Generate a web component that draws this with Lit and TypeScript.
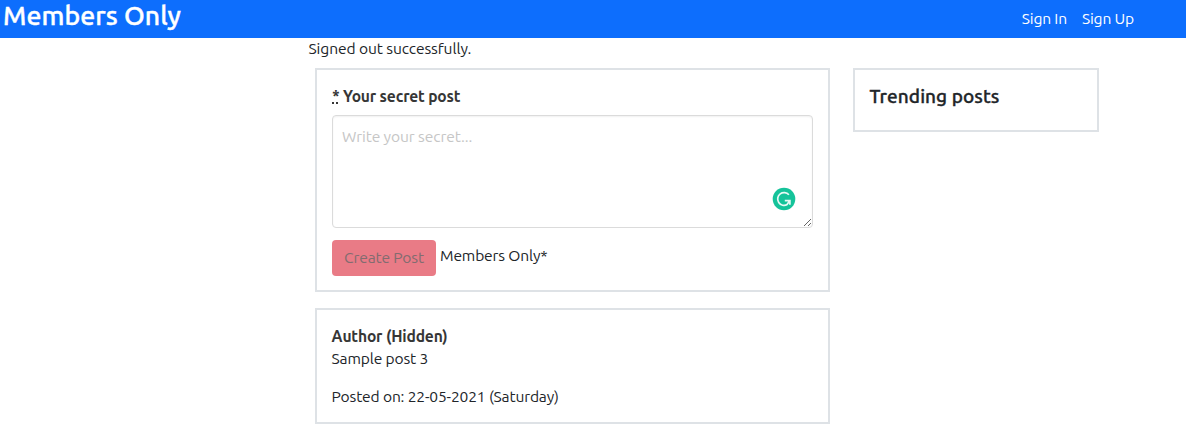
import { LitElement, html, css } from "lit";
import { customElement } from "lit/decorators.js";

@customElement("app-root")
class AppRoot extends LitElement {
  static styles = css`
    :host {
      display: block;
      height: 434px;
      overflow: hidden;
      background: #fff;
      color: #212529;
      font: 15.6px/22.6px Ubuntu, "Noto Sans", sans-serif;
      letter-spacing: -0.16px;
    }
    * { box-sizing: border-box; }
    nav {
      display: flex;
      justify-content: space-between;
      height: 37.6px;
      padding: 0 52px 0 3px;
      background: #0d6efd;
      color: #fff;
    }
    .brand {
      margin: 0;
      font-size: 26.6px;
      font-weight: 500;
      line-height: 30px;
      letter-spacing: 0.05px;
      -webkit-text-stroke: 0.4px currentColor;
    }
    .links { display: flex; gap: 15px; padding-top: 7px; }
    .links a { color: inherit; text-decoration: none; }
    .notice { margin: 0; height: 30.4px; padding-left: 308.5px; line-height: 21.4px; letter-spacing: -0.1px; }
    .columns { display: flex; align-items: flex-start; gap: 23px; padding-left: 315px; }
    .feed { display: flex; flex-direction: column; gap: 16px; width: 515px; }
    .card { border: 2px solid #dee2e6; padding: 15px; }
    .compose { height: 224px; }
    .post { height: 116px; padding-left: 14.6px; }
    .trending { width: 246px; height: 64px; padding-left: 14.5px; }
    .trending h2 {
      margin: 0;
      font-size: 19px;
      font-weight: 500;
      line-height: 23px;
      letter-spacing: 0.06px;
      -webkit-text-stroke: 0.35px currentColor;
    }
    label { display: block; height: 30px; color: #363636; font-weight: 700; }
    abbr {
      display: inline-block;
      width: 6px;
      height: 20.5px;
      margin-right: 5px;
      line-height: 22px;
      text-decoration: none;
      background: radial-gradient(circle at 1px 1px, #363636 0.8px, transparent 1px) 0 100% / 4px 3px repeat-x;
      vertical-align: top;
    }
    .field { position: relative; height: 113px; }
    textarea {
      display: block;
      width: 481px;
      height: 113px;
      margin: 0;
      padding: 9px;
      border: 1px solid #dbdbdb;
      border-radius: 4px;
      background: #fff;
      box-shadow: inset 0 1px 2px rgba(10, 10, 10, 0.06);
      font: inherit;
      letter-spacing: -0.1px;
      outline: 0;
      resize: vertical;
    }
    textarea::placeholder { color: #c6c6c6; opacity: 1; }
    .checker { position: absolute; left: 440px; top: 72px; }
    .actions { display: flex; gap: 4px; padding-top: 11.8px; }
    button {
      width: 104px;
      height: 36px;
      padding: 0;
      border: 0;
      border-radius: 4px;
      background: #e97b86;
      color: #826c70;
      font: inherit;
      letter-spacing: inherit;
    }
    .members { padding-top: 4px; }
    .author { height: 22px; color: #363636; font-weight: 700; }
    .body { height: 38px; }
  `;

  render() {
    return html`
      <nav>
        <h1 class="brand">Members Only</h1>
        <div class="links"><a>Sign In</a><a>Sign Up</a></div>
      </nav>
      <p class="notice">Signed out successfully.</p>
      <main class="columns">
        <div class="feed">
          <section class="card compose">
            <label><abbr title="required">*</abbr>Your secret post</label>
            <div class="field">
              <textarea placeholder="Write your secret..."></textarea>
              <svg class="checker" width="24" height="24" viewBox="0 0 24 24" fill="none">
                <circle cx="12" cy="12" r="11.3" fill="#15c39a" />
                <path d="M16.9 7.8A6.4 6.4 0 1 0 15.2 17.6M12.8 13.6H17.9V17.8M17.5 14L14.9 17.7" stroke="#fff" stroke-opacity=".9" stroke-width="1.7" />
              </svg>
            </div>
            <div class="actions">
              <button disabled>Create Post</button>
              <span class="members">Members Only*</span>
            </div>
          </section>
          <article class="card post">
            <div class="author">Author (Hidden)</div>
            <div class="body">Sample post 3</div>
            <div>Posted on: 22-05-2021 (Saturday)</div>
          </article>
        </div>
        <aside class="card trending"><h2>Trending posts</h2></aside>
      </main>
    `;
  }
}
